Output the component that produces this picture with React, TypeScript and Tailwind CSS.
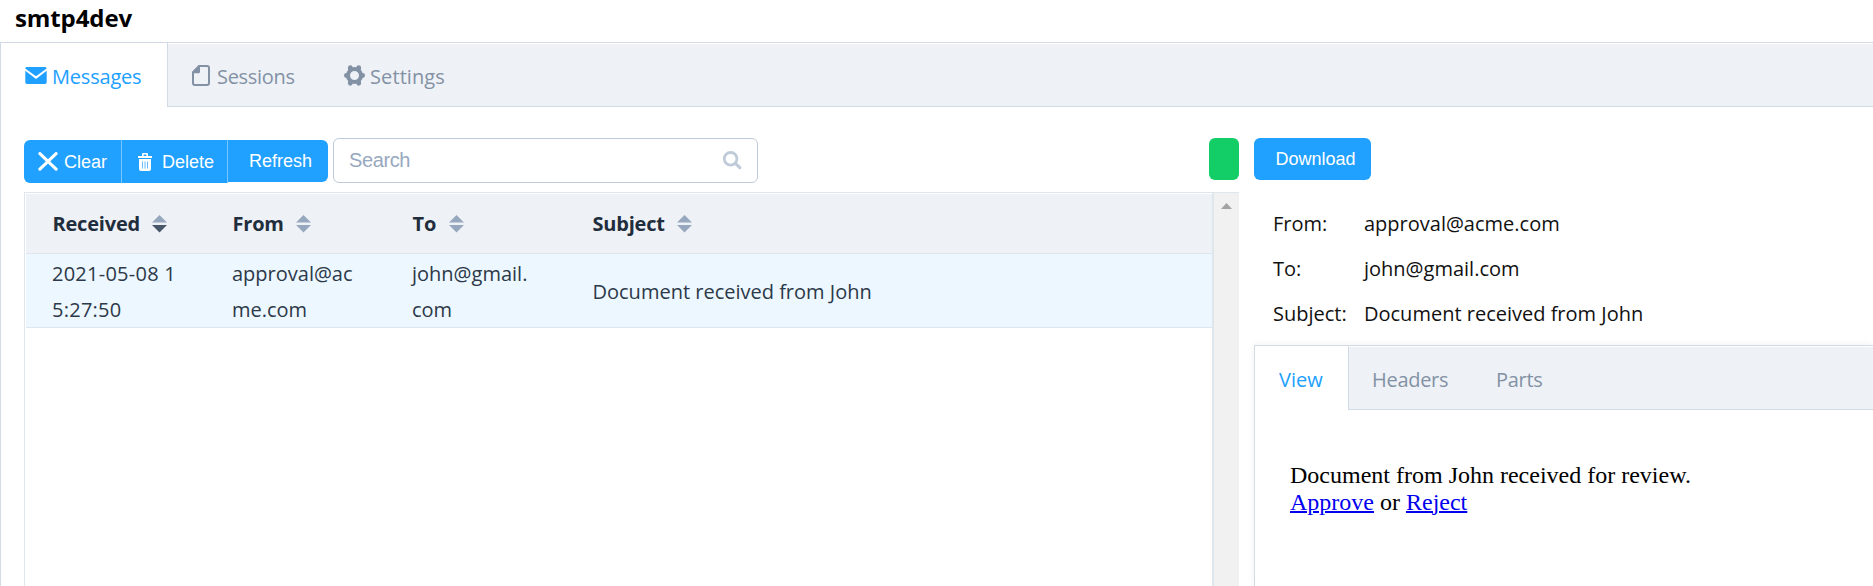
import type { ReactNode } from "react";

const MailIcon = () => (
  <svg width="22" height="17" viewBox="0 0 22 17" fill="currentColor">
    <path d="M2 0H19.6A1.8 1.8 0 0 1 21.6 1.4L11 9.2L0.2 1.4A1.9 1.9 0 0 1 2 0Z" />
    <path d="M0.3 3.8L11 12L21.7 3.8V15.3A1.7 1.7 0 0 1 20 17H2A1.7 1.7 0 0 1 0.3 15.3Z" />
  </svg>
);

const DocumentIcon = () => (
  <svg width="18" height="21" viewBox="0 0 18 21">
    <path d="M7 1H15A2 2 0 0 1 17 3V18A2 2 0 0 1 15 20H3A2 2 0 0 1 1 18V7.2Z" fill="none" stroke="currentColor" strokeWidth="2" />
    <path d="M8 0.5V6A2 2 0 0 1 6 8.3H0.6V7Z" fill="currentColor" />
  </svg>
);

const SettingIcon = () => (
  <svg width="21" height="21" viewBox="0 0 21 21" fill="none" stroke="currentColor">
    <circle cx="10.5" cy="10.5" r="6.5" strokeWidth="4" />
    <path d="M6.3 2.7v1M14.7 2.7v1M6.3 18.3v-1M14.7 18.3v-1M2.4 10.5h1M18.6 10.5h-1" strokeWidth="4.8" strokeLinecap="round" />
  </svg>
);

const CloseIcon = () => (
  <svg width="20" height="19" viewBox="0 0 20 19">
    <path d="M1.9 1.6L18.1 17.2M18.1 1.6L1.9 17.2" stroke="currentColor" strokeWidth="3.1" strokeLinecap="round" />
  </svg>
);

const DeleteIcon = () => (
  <svg width="14" height="18" viewBox="0 0 14 18" fill="currentColor">
    <path fillRule="evenodd" d="M4 3V1Q4 0 5 0H9Q10 0 10 1V3H14V5H0V3ZM5.6 3H8.4V1.6H5.6Z" />
    <path d="M1 6H13V16Q13 18 11 18H3Q1 18 1 16Z" />
    <path d="M4.5 8.5V15.5M7 8.5V15.5M9.5 8.5V15.5" stroke="#20a0ff" strokeWidth="0.7" />
  </svg>
);

const SearchIcon = () => (
  <svg width="20" height="19" viewBox="0 0 20 19" fill="none" stroke="currentColor">
    <circle cx="8.6" cy="7.8" r="6.3" strokeWidth="2.8" />
    <path d="M13.4 12.4L17.8 16.6" strokeWidth="3.2" strokeLinecap="round" />
  </svg>
);

const Sort = ({ desc = false }: { desc?: boolean }) => (
  <svg width="15" height="18" viewBox="0 0 15 18" fill="#97a8be">
    <path d="M0 7.5L7.5 0L15 7.5Z" />
    <path d="M0 10L7.5 17.5L15 10Z" fill={desc ? "#48576a" : "#97a8be"} />
  </svg>
);

const Heading = ({ children, desc }: { children: ReactNode; desc?: boolean }) => (
  <div className="flex items-center gap-[12.5px] pl-[26.5px] font-bold leading-[60px] tracking-[-0.2px]">
    <span>{children}</span>
    <Sort desc={desc} />
  </div>
);

const columns = "grid grid-cols-[180px_180px_180px_1fr]";

export default function App() {
  return (
    <div className="flex h-[586px] w-full flex-col overflow-hidden bg-white font-['Open_Sans','Noto_Sans',sans-serif] text-[20px]">
      <h1 className="h-[42px] shrink-0 pl-[15px] text-[24px] leading-[35px] font-bold tracking-[-0.1px] text-black">smtp4dev</h1>
      <div className="flex min-h-0 flex-1 flex-col border-t border-l border-[#d1dbe5]">
        <nav className="mt-px flex h-[63px] shrink-0 border-b border-[#d1dbe5] bg-[#eef1f6] leading-[64px] text-[#8391a5]">
          <div className="-mt-px mb-[-1px] flex w-[167px] items-center gap-[5px] border-r border-[#d1dbe5] bg-white pl-6 text-[#20a0ff]">
            <MailIcon />
            <span className="pt-[3px] tracking-[-0.2px]">Messages</span>
          </div>
          <div className="flex w-[152px] items-center gap-[7px] pl-6">
            <DocumentIcon />
            <span className="pt-[3px] tracking-[-0.3px]">Sessions</span>
          </div>
          <div className="flex items-center gap-[5px] pl-6">
            <SettingIcon />
            <span className="pt-[3px] tracking-[0.1px]">Settings</span>
          </div>
        </nav>

        <div className="flex min-h-0 flex-1">
          <section className="flex w-[1238px] shrink-0 flex-col pt-[31px] pl-[23px]">
            <div className="mb-[9px] flex h-[45px] items-start font-['Liberation_Sans',sans-serif] text-[18px]">
              <div className="mt-[2px] flex items-start text-white">
                <button className="flex h-[43px] w-[98px] items-center gap-[6px] rounded-l-[6px] border-r border-[#79c6ff] bg-[#20a0ff] pl-[14px]">
                  <CloseIcon />
                  <span className="pt-px">Clear</span>
                </button>
                <button className="flex h-[43px] w-[106px] items-center gap-[10px] border-r border-[#79c6ff] bg-[#20a0ff] pl-4">
                  <DeleteIcon />
                  <span className="pt-px">Delete</span>
                </button>
                <button className="h-[42px] w-[100px] rounded-r-[6px] bg-[#20a0ff] pl-[5px]">Refresh</button>
              </div>
              <div className="ml-[5px] flex h-[45px] w-[425px] items-center justify-between rounded-[6px] border border-[#bfcbd9] pr-[15px] pl-[15px] text-[20px] text-[#97a8be]">
                <span className="pb-[2px] tracking-[-0.4px]">Search</span>
                <span className="text-[#bfcbd9]"><SearchIcon /></span>
              </div>
              <div className="ml-auto h-[42px] w-[30px] rounded-[6px] bg-[#13ce66]" />
            </div>

            <div className="flex min-h-0 flex-1 border-t border-l border-[#dfe6ec] text-[#1f2d3d]">
              <div className="w-[1189px] shrink-0 border-r-2 border-[#dfe6ec] pt-px pl-px">
                <div className={columns + " h-[60px] border-b border-[#dfe6ec] bg-[#eef1f6]"}>
                  <Heading desc>Received</Heading>
                  <Heading>From</Heading>
                  <Heading>To</Heading>
                  <Heading>Subject</Heading>
                </div>
                <div className={columns + " h-[74px] items-center border-b border-[#dfe6ec] bg-[#edf7ff] pt-[2px] leading-[36px] text-[#2c3948]"}>
                  <div className="pl-[26px] tracking-[0.25px]">2021-05-08 1<br />5:27:50</div>
                  <div className="pl-[26px]">approval@ac<br />me.com</div>
                  <div className="pl-[26px]">john@gmail.<br />com</div>
                  <div className="pl-[26.5px]">Document received from John</div>
                </div>
              </div>
              <div className="flex flex-1 justify-center bg-[#f1f1f1] pt-[10px]">
                <svg width="11" height="6" viewBox="0 0 11 6"><path d="M0 6L5.5 0L11 6Z" fill="#a3a3a3" /></svg>
              </div>
            </div>
          </section>

          <section className="flex min-w-0 flex-1 flex-col pt-[31px] pl-[15px]">
            <button className="h-[42px] w-[117px] shrink-0 rounded-[6px] bg-[#20a0ff] pl-[6px] font-['Liberation_Sans',sans-serif] text-[18px] text-white">Download</button>
            <dl className="grid shrink-0 grid-cols-[91px_1fr] pt-[21px] pl-[19px] leading-[45px] text-[#111111]">
              <dt>From:</dt><dd>approval@acme.com</dd>
              <dt>To:</dt><dd>john@gmail.com</dd>
              <dt>Subject:</dt><dd>Document received from John</dd>
            </dl>
            <div className="mt-[9px] flex-1 border-t border-l border-[#d1dbe5] shadow-[0_0_8px_rgba(0,0,0,0.06)]">
              <nav className="mt-px flex h-[63px] border-b border-[#d1dbe5] bg-[#eef1f6] leading-[65px] text-[#8391a5]">
                <div className="-mt-px mb-[-1px] w-[94px] border-r border-[#d1dbe5] bg-white pt-px pl-6 text-[#20a0ff]">View</div>
                <div className="w-[124px] pl-[23px] tracking-[-0.3px]">Headers</div>
                <div className="pl-[23px] tracking-[-0.3px]">Parts</div>
              </nav>
              <div className="pt-[52px] pl-[35px] font-['Liberation_Serif',serif] text-[24px] leading-[27px] text-black">
                <p>Document from John received for review.</p>
                <p><a className="text-[#0000ee] underline decoration-2">Approve</a> or <a className="text-[#0000ee] underline decoration-2">Reject</a></p>
              </div>
            </div>
          </section>
        </div>
      </div>
    </div>
  );
}
